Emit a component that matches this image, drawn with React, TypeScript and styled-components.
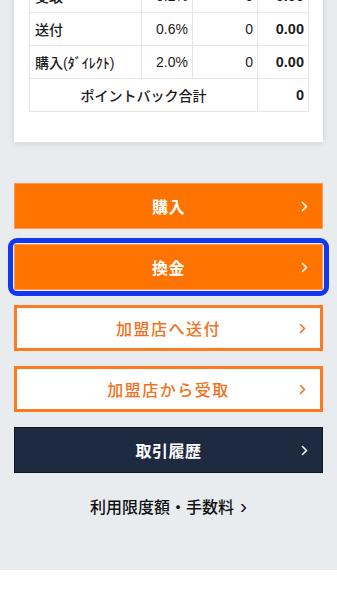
import { createGlobalStyle, styled } from 'styled-components';

const GlobalStyle = createGlobalStyle`
  html, body {
    margin: 0;
    padding: 0;
    background: #ffffff;
  }
  body {
    font-family: "Liberation Sans", "Noto Sans CJK JP", sans-serif;
    color: #1a1a1a;
    overflow: hidden;
  }
`;

type Row = { label: string; rate: string; count: string; point: string };

const ROWS: Row[] = [
  { label: '受取', rate: '0.2%', count: '0', point: '0.00' },
  { label: '送付', rate: '0.6%', count: '0', point: '0.00' },
  { label: '購入(ﾀﾞｲﾚｸﾄ)', rate: '2.0%', count: '0', point: '0.00' },
];

type Variant = 'primary' | 'outline' | 'dark';

const ACTIONS: { id: number; title: string; variant: Variant; focused?: boolean }[] = [
  { id: 1, title: '購入', variant: 'primary' },
  { id: 2, title: '換金', variant: 'primary', focused: true },
  { id: 3, title: '加盟店へ送付', variant: 'outline' },
  { id: 4, title: '加盟店から受取', variant: 'outline' },
  { id: 5, title: '取引履歴', variant: 'dark' },
];

const Chevron = ({ color }: { color: string }) => (
  <svg width="7" height="11" viewBox="0 0 7 11" fill="none">
    <path d="M1.5 1.5L5.5 5.5L1.5 9.5" stroke={color} strokeWidth="1.6" strokeLinecap="round" strokeLinejoin="round" />
  </svg>
);

const chevronColor: Record<Variant, string> = {
  primary: '#ffffff',
  outline: '#f07220',
  dark: '#ffffff',
};

const App = () => {
  return (
    <>
      <GlobalStyle />
      <St.Page>
        <St.Card>
          <St.Table>
            <colgroup>
              <col style={{ width: 112 }} />
              <col style={{ width: 51 }} />
              <col style={{ width: 65 }} />
              <col style={{ width: 51 }} />
            </colgroup>
            <tbody>
              {ROWS.map(({ label, rate, count, point }) => (
                <tr key={label}>
                  <St.LabelCell>{label}</St.LabelCell>
                  <St.NumCell>{rate}</St.NumCell>
                  <St.NumCell>{count}</St.NumCell>
                  <St.NumCell $bold>{point}</St.NumCell>
                </tr>
              ))}
              <tr>
                <St.TotalCell colSpan={3}>ポイントバック合計</St.TotalCell>
                <St.NumCell $bold>0</St.NumCell>
              </tr>
            </tbody>
          </St.Table>
        </St.Card>

        <St.Actions>
          {ACTIONS.map(({ id, title, variant, focused }) => (
            <St.ActionButton key={id} $variant={variant} $focused={focused}>
              <span />
              <St.ButtonLabel $variant={variant}>{title}</St.ButtonLabel>
              <St.ChevronBox>
                <Chevron color={chevronColor[variant]} />
              </St.ChevronBox>
            </St.ActionButton>
          ))}
        </St.Actions>

        <St.LimitLink>
          利用限度額・手数料
          <St.LinkArrow>›</St.LinkArrow>
        </St.LimitLink>
      </St.Page>
    </>
  );
};

export default App;

const St = {
  Page: styled.main`
    display: flex;
    flex-direction: column;
    width: 337px;
    padding: 0 14px 52px;
    box-sizing: border-box;

    background-color: #e9ecef;
  `,
  Card: styled.section`
    margin-top: -37px;
    padding: 16px 15px 30px;

    background-color: #ffffff;
    box-shadow: 0 1px 6px rgba(0, 0, 0, 0.12);
  `,
  Table: styled.table`
    width: 279px;
    border-collapse: collapse;
    table-layout: fixed;

    font-size: 14px;
    color: #1c1c1c;

    & td {
      height: 33px;
      border: 1px solid #e6e6e6;
      box-sizing: border-box;
    }
  `,
  LabelCell: styled.td`
    padding: 0 5px;
    text-align: left;
    white-space: nowrap;
    font-weight: 500;
  `,
  NumCell: styled.td<{ $bold?: boolean }>`
    padding: 0 4px;
    text-align: right;
    font-weight: ${({ $bold }) => ($bold ? 700 : 400)};
    font-size: ${({ $bold }) => ($bold ? '14.5px' : '14px')};
  `,
  TotalCell: styled.td`
    text-align: center;
    font-weight: 500;
  `,
  Actions: styled.div`
    display: flex;
    flex-direction: column;
    gap: 15px;
    margin-top: 41px;
  `,
  ActionButton: styled.button<{ $variant: Variant; $focused?: boolean }>`
    position: relative;
    display: grid;
    grid-template-columns: 1fr auto 1fr;
    align-items: center;
    width: 100%;
    height: 46px;
    padding: 0;
    box-sizing: border-box;
    cursor: pointer;

    border-radius: 0;
    font-family: inherit;
    background-color: ${({ $variant }) =>
      $variant === 'primary' ? '#ff7300' : $variant === 'dark' ? '#1e2a3f' : '#ffffff'};
    border: ${({ $variant }) =>
      $variant === 'primary'
        ? '1px solid #ff9a55'
        : $variant === 'dark'
          ? '1px solid #0f1626'
          : '3px solid #ff7a1c'};

    &::after {
      content: '';
      display: ${({ $focused }) => ($focused ? 'block' : 'none')};
      position: absolute;
      inset: -7px;
      border: 5px solid #1238ee;
      border-radius: 9px;
      pointer-events: none;
    }
  `,
  ButtonLabel: styled.span<{ $variant: Variant }>`
    font-size: 16px;
    font-weight: ${({ $variant }) => ($variant === 'outline' ? 500 : 700)};
    letter-spacing: ${({ $variant }) => ($variant === 'outline' ? '1.5px' : '0.5px')};
    color: ${({ $variant }) => ($variant === 'outline' ? '#f07220' : '#ffffff')};
  `,
  ChevronBox: styled.span`
    display: flex;
    justify-content: flex-end;
    padding-right: 14px;
  `,
  LimitLink: styled.a`
    display: flex;
    justify-content: center;
    align-items: center;
    gap: 6px;
    margin-top: 21px;

    font-size: 16px;
    font-weight: 500;
    color: #111111;
  `,
  LinkArrow: styled.span`
    font-size: 21px;
    line-height: 1;
    margin-top: -2px;
  `,
};
